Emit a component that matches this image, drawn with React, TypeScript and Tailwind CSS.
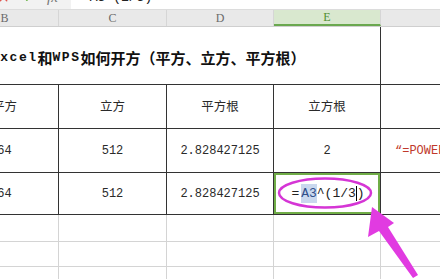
import { Check, X } from "lucide-react";

const cjk = "font-['Noto_Sans_CJK_SC',sans-serif]";
const mono = "font-['Liberation_Mono','Noto_Sans_CJK_SC',monospace]";
const widths = ["w-[108px]", "w-[108px]", "w-[107px]", "w-[107px]"];

function ColHeader() {
  const letters = ["B", "C", "D", "E"];
  return (
    <div className="flex h-[17px] bg-[#e9e9e9] border-b border-[#cfcfcf] font-['Liberation_Serif',serif] text-[12px] text-[#6b6b6b]">
      {letters.map((l, i) => (
        <div
          key={l}
          className={`${widths[i]} shrink-0 flex items-center justify-center border-r border-[#d6d6d6] ${
            l === "E" ? "bg-[#d9e8cf] text-[#4f8f2f] border-b-2 border-b-[#6aa84f]" : ""
          }`}
        >
          {l}
        </div>
      ))}
      <div className="flex-1" />
    </div>
  );
}

function Row({ cells, h, extra }: { cells: React.ReactNode[]; h: string; extra?: React.ReactNode }) {
  return (
    <div className={`flex ${h} border-b border-[#333]`}>
      {cells.map((c, i) => (
        <div
          key={i}
          className={`${widths[i]} shrink-0 flex items-center justify-center border-r border-[#333] text-[#2a2a2a] ${
            i === 3 && extra === "edit" ? "shadow-[inset_0_0_0_2px_#70ad47]" : ""
          }`}
        >
          {c}
        </div>
      ))}
      <div className="flex-1 flex items-center pl-[14px]">{extra !== "edit" ? extra : null}</div>
    </div>
  );
}

function EmptyRow({ h }: { h: string }) {
  return (
    <div className={`flex ${h} border-b border-[#d4d4d4]`}>
      {widths.map((w, i) => (
        <div key={i} className={`${w} shrink-0 border-r border-[#d4d4d4]`} />
      ))}
      <div className="flex-1" />
    </div>
  );
}

export default function App() {
  const num = `${mono} text-[12px]`;
  const head = `${cjk} text-[12.5px]`;
  const latin = `${mono} text-[13px] tracking-[1.5px]`;
  return (
    <div className="relative w-[440px] h-[279px] overflow-hidden bg-white">
      {/* formula bar, mostly scrolled off the top */}
      <div className="flex h-[24px] -mt-[14px] bg-[#f2f2f2] border-b border-[#dcdcdc]">
        <div className="w-[74px] shrink-0 flex items-center gap-[12px] -ml-[3px]">
          <X size={13} strokeWidth={2.5} className="text-[#e0554f]" />
          <Check size={13} strokeWidth={2.5} className="text-[#5fae3a]" />
          <span className="font-['Liberation_Serif',serif] italic text-[15px] text-[#777]">fx</span>
        </div>
        <div className={`flex-1 bg-white pl-[11px] flex items-center ${mono} text-[13px] text-[#222]`}>
          =A3^(1/3)
        </div>
      </div>

      <div className="-ml-[49px] w-[489px]">
        <ColHeader />

        {/* merged title row */}
        <div className="flex h-[58px] border-b border-[#333]">
          <div className="w-[430px] shrink-0 border-r border-[#333] flex items-center pl-[40px] pt-[5px] font-bold text-[15px] text-[#111]">
            <span className={latin}>Excel</span>
            <span className={cjk}>和</span>
            <span className={latin}>WPS</span>
            <span className={cjk}>如何开方（平方、立方、平方根）</span>
          </div>
          <div className="flex-1" />
        </div>

        <Row
          h="h-[44px]"
          cells={[
            <span className={head}>平方</span>,
            <span className={head}>立方</span>,
            <span className={head}>平方根</span>,
            <span className={head}>立方根</span>,
          ]}
        />
        <Row
          h="h-[44px]"
          cells={[
            <span className={num}>64</span>,
            <span className={num}>512</span>,
            <span className={num}>2.828427125</span>,
            <span className={num}>2</span>,
          ]}
          extra={<span className={`${mono} text-[12px] text-[#c0392b] whitespace-nowrap`}>“=POWER(A3,1/3)”</span>}
        />
        <Row
          h="h-[42px]"
          extra="edit"
          cells={[
            <span className={num}>64</span>,
            <span className={num}>512</span>,
            <span className={num}>2.828427125</span>,
            <span className={`${mono} text-[13px] text-[#222] flex items-center ml-[2px]`}>
              =<span className="bg-[#c9d8ee] text-[#2f4f8a] ml-[2px]">A3</span>^(1/3
              <span className="inline-block w-px h-[15px] bg-black" />)
            </span>,
          ]}
        />
        <EmptyRow h="h-[27px]" />
        <EmptyRow h="h-[25px]" />
        <EmptyRow h="h-[25px]" />
      </div>

      {/* magenta annotation */}
      <svg className="absolute inset-0 pointer-events-none" width="440" height="279">
        <ellipse cx="325" cy="193" rx="46" ry="14.5" fill="none" stroke="#d535d5" strokeWidth="2.5" />
        <polygon
          points="372,207 394,223 388,227 418,275 413,278 379,231 368,237"
          fill="#e13be1"
        />
      </svg>
    </div>
  );
}
